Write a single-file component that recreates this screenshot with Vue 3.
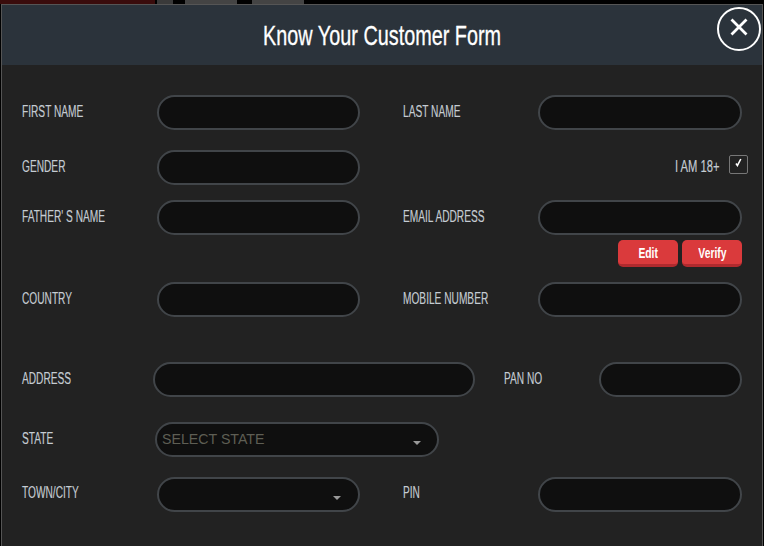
<script setup>
const title = 'Know Your Customer Form'
</script>

<template>
  <div class="page">
    <div class="strip">
      <span class="s1"></span><span class="s2"></span><span class="s3"></span><span class="s4"></span><span class="s5"></span>
    </div>
    <section class="modal">
      <header class="head"><h1>{{ title }}</h1></header>
      <div class="body">
        <div class="row r1">
          <label class="lab"><span>FIRST NAME</span></label><div class="inp w1"></div>
          <label class="lab right"><span>LAST NAME</span></label><div class="inp w1b"></div>
        </div>
        <div class="row r2">
          <label class="lab"><span>GENDER</span></label><div class="inp w1"></div>
          <div class="adult"><label class="lab-s"><span>I AM 18+</span></label>
            <span class="check"><svg width="7" height="9" viewBox="0 0 7 9"><path d="M1 5.5L2.4 7.5L5.8 1" stroke="#fff" stroke-width="1.6" fill="none"/></svg></span>
          </div>
        </div>
        <div class="row r3">
          <label class="lab"><span>FATHER' S NAME</span></label><div class="inp w1"></div>
          <label class="lab right"><span>EMAIL ADDRESS</span></label><div class="inp w1b"></div>
        </div>
        <div class="btns"><button class="btn"><span>Edit</span></button><button class="btn"><span>Verify</span></button></div>
        <div class="row r4">
          <label class="lab"><span>COUNTRY</span></label><div class="inp w1"></div>
          <label class="lab right"><span>MOBILE NUMBER</span></label><div class="inp w1b"></div>
        </div>
        <div class="row r5">
          <label class="lab short"><span>ADDRESS</span></label><div class="inp w2"></div>
          <label class="lab pan"><span>PAN NO</span></label><div class="inp w3"></div>
        </div>
        <div class="row r6">
          <label class="lab short2"><span>STATE</span></label>
          <div class="inp w4 sel"><span class="ph">SELECT STATE</span><i class="caret"></i></div>
        </div>
        <div class="row r7">
          <label class="lab up"><span>TOWN/CITY</span></label><div class="inp w1 sel"><i class="caret"></i></div>
          <label class="lab right up"><span>PIN</span></label><div class="inp w1b"></div>
        </div>
      </div>
      <button class="close" aria-label="Close">
        <svg width="20" height="20" viewBox="0 0 20 20"><path d="M2.5 2.5L17.5 17.5M17.5 2.5L2.5 17.5" stroke="#fff" stroke-width="2.8" fill="none"/></svg>
      </button>
    </section>
  </div>
</template>

<style scoped>
.page { position: relative; width: 764px; height: 546px; background: #000; overflow: hidden; font-family: "Liberation Sans", sans-serif; }
.strip { height: 4px; display: flex; }
.s1 { width: 155px; background: #3a0c0c; }
.s2 { width: 2px; }
.s3 { width: 16px; background: #3a3a3a; }
.s4 { width: 52px; margin-left: 12px; background: #444; }
.s5 { width: 52px; margin-left: 15px; background: #444; }
.modal { margin-left: 1px; width: 762px; height: 542px; border: 1px solid #555; border-bottom: 0; box-sizing: border-box; position: relative; background: #222; }
.head { height: 60px; background: #2b333b; display: flex; align-items: center; justify-content: center; }
.head h1 { margin: 2px 0 0; color: #fff; font-size: 28px; font-weight: 400; white-space: nowrap; transform: scaleX(.708); -webkit-text-stroke: .3px #fff; }
.body { padding: 0 20px; position: relative; }
.row { display: flex; align-items: center; height: 36px; position: relative; }
.r1 { margin-top: 29px; }
.r2 { margin-top: 19px; }
.r3 { margin-top: 14px; }
.r4 { margin-top: 14px; }
.r5 { margin-top: 44px; }
.r6 { margin-top: 24px; }
.r7 { margin-top: 19px; }
.lab { width: 135px; color: #c5ccd3; font-size: 16px; white-space: nowrap; }
.lab span, .lab-s span { display: inline-block; transform: scaleX(.635); transform-origin: left center; -webkit-text-stroke: .15px #c5ccd3; }
.up { margin-top: -2px; }
.right { width: 135px; margin-left: 43px; }
.short { width: 131px; }
.short2 { width: 133px; }
.pan { width: 95px; margin-left: 29px; }
.inp { box-sizing: border-box; height: 35px; border: 2px solid #414549; border-radius: 18px; background: #0f0f0f; position: relative; }
.w1 { width: 203px; }
.w1b { width: 204px; }
.w2 { width: 323px; }
.w3 { width: 143px; }
.w4 { width: 284px; }
.sel { display: flex; align-items: center; }
.ph { font: 14.2px "Liberation Sans", sans-serif; color: #5e5e54; padding-left: 5px; }
.caret { position: absolute; right: 16px; top: 17px; border: 4px solid transparent; border-top: 4px solid #999; border-bottom: 0; }
.w1 .caret { right: 17px; }
.adult { margin-left: auto; margin-right: -6px; display: flex; align-items: center; gap: 9px; }
.lab-s { width: 45px; color: #c5ccd3; font-size: 16px; white-space: nowrap; }
.lab-s span { transform: scaleX(.7); }
.check { box-sizing: border-box; width: 19px; height: 19px; margin-top: -6px; border: 1px solid #777; border-radius: 2px; display: flex; justify-content: center; padding-top: 2px; }
.btns { display: flex; justify-content: flex-end; gap: 4px; margin-top: 5px; height: 27px; }
.btn { box-sizing: border-box; width: 60px; height: 27px; padding: 0; border: 0; border-bottom: 3px solid #b02a2e; border-radius: 5px; background: #da3a3c; color: #fff; font-family: inherit; font-size: 15px; font-weight: 700; }
.btn span { display: inline-block; transform: scaleX(.69); }
.close { position: absolute; top: 2px; right: 1px; width: 44px; height: 44px; box-sizing: border-box; border: 2px solid #fff; border-radius: 50%; background: #2b333b; padding: 0 0 4px; display: flex; align-items: center; justify-content: center; }
</style>
